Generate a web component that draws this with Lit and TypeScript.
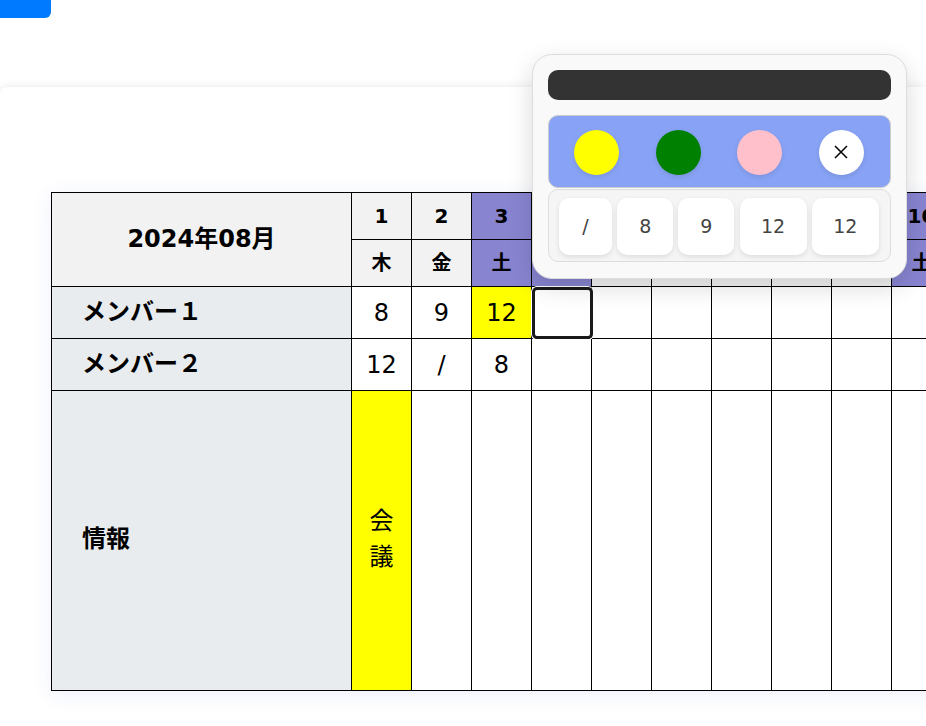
import { LitElement, html, css } from "lit";
import { customElement } from "lit/decorators.js";

const WD = ["木", "金", "土", "日", "月", "火", "水"];
const DAYS = Array.from({ length: 31 }, (_, i) => ({ d: i + 1, w: WD[i % 7] }));
const isOff = (w: string) => w === "土" || w === "日";
const M1: Record<number, string> = { 1: "8", 2: "9", 3: "12" };
const M2: Record<number, string> = { 1: "12", 2: "/", 3: "8" };

@customElement("app-root")
export class AppRoot extends LitElement {
  static styles = css`
    :host {
      display: block;
      height: 100vh;
      overflow: hidden;
      position: relative;
      background: #fff;
      font-family: "DejaVu Sans", "Noto Sans CJK JP", sans-serif;
      color: #000;
    }
    .top-btn {
      width: 51px;
      height: 18px;
      background: #007bff;
      border-radius: 0 0 6px 0;
    }
    .card {
      margin-top: 69px;
      height: 700px;
      padding: 105px 0 0 51px;
      border-radius: 8px 0 0 0;
      background: #fff;
      box-shadow: 0 0 10px rgba(0, 0, 0, 0.1);
    }
    table {
      border-collapse: collapse;
      table-layout: fixed;
      width: 2160px;
      box-shadow: 0 4px 20px rgba(40, 70, 200, 0.08);
    }
    td,
    th {
      border: 1px solid #000;
      padding: 0;
      text-align: center;
      vertical-align: middle;
      overflow: hidden;
      line-height: 1;
    }
    .c-first { width: 300px; }
    .c-day { width: 60px; }
    .h { height: 46px; background: #f2f2f2; font-weight: 700; font-size: 20px; }
    .title { background: #f2f2f2; font-size: 24px; font-weight: 700; padding-bottom: 1px; }
    .off { background: #8884d0; }
    .r { height: 52px; font-size: 24px; }
    .name {
      background: #e9ecef;
      text-align: left;
      padding: 0 0 2px 30px;
      font-size: 24px;
      font-weight: 700;
    }
    .yellow { background: #ff0; }
    .info { height: 300px; }
    .info .name { padding-bottom: 4px; }
    .v { padding-bottom: 4px; }
    .v div { line-height: 36px; font-size: 24px; }
    .sel { position: relative; overflow: visible; }
    .sel::after {
      content: "";
      position: absolute;
      left: 0;
      top: 0;
      width: 61px;
      height: 52px;
      box-sizing: border-box;
      border: 3px solid #1a1a1a;
      border-radius: 5px;
      box-shadow: 0 0 0 1px #fff;
    }
    .popup {
      position: absolute;
      left: 532px;
      top: 54px;
      width: 375px;
      height: 225px;
      box-sizing: border-box;
      padding: 15px;
      background: #f9f9f9;
      border: 1px solid #ddd;
      border-radius: 20px;
      box-shadow: 0 8px 24px rgba(0, 0, 0, 0.15);
      display: flex;
      flex-direction: column;
    }
    .bar {
      height: 30px;
      background: #333;
      border-radius: 10px;
      margin-bottom: 15px;
    }
    .colors {
      height: 73px;
      box-sizing: border-box;
      padding: 1px 26px 0 25px;
      background: #88a3f5;
      border: 1px solid #ccc;
      border-radius: 10px;
      display: flex;
      align-items: center;
      justify-content: space-between;
    }
    .dot {
      width: 45px;
      height: 45px;
      border-radius: 50%;
      box-shadow: 0 2px 5px rgba(0, 0, 0, 0.1);
      display: flex;
      align-items: center;
      justify-content: center;
    }
    .dot svg { width: 16px; height: 16px; }
    .values {
      margin-top: 1px;
      height: 73px;
      box-sizing: border-box;
      padding: 1px 10px 0;
      background: #f5f5f5;
      border: 1px solid #ddd;
      border-radius: 10px;
      display: flex;
      align-items: center;
      gap: 5.2px;
    }
    .val {
      height: 57px;
      background: #fff;
      border-radius: 10px;
      box-shadow: 0 2px 5px rgba(0, 0, 0, 0.1);
      display: flex;
      align-items: center;
      justify-content: center;
      font-size: 19px;
      color: #444;
    }
    .w53 { width: 53px; }
    .w56 { width: 56px; }
    .w67 { width: 67px; }
  `;

  render() {
    return html`
      <div class="top-btn"></div>
      <div class="card">
        <table>
          <colgroup>
            <col class="c-first" />
            ${DAYS.map(() => html`<col class="c-day" />`)}
          </colgroup>
          <tr>
            <th class="title" rowspan="2">2024年08月</th>
            ${DAYS.map((x) => html`<th class="h ${isOff(x.w) ? "off" : ""}">${x.d}</th>`)}
          </tr>
          <tr>
            ${DAYS.map((x) => html`<th class="h ${isOff(x.w) ? "off" : ""}">${x.w}</th>`)}
          </tr>
          <tr class="r">
            <td class="name">メンバー１</td>
            ${DAYS.map(
              (x) =>
                html`<td class="${x.d === 3 ? "yellow" : ""} ${x.d === 4 ? "sel" : ""}">${M1[x.d] ?? ""}</td>`
            )}
          </tr>
          <tr class="r">
            <td class="name">メンバー２</td>
            ${DAYS.map((x) => html`<td>${M2[x.d] ?? ""}</td>`)}
          </tr>
          <tr class="info">
            <td class="name">情報</td>
            ${DAYS.map((x) =>
              x.d === 1
                ? html`<td class="yellow v"><div>会</div><div>議</div></td>`
                : html`<td></td>`
            )}
          </tr>
        </table>
      </div>
      <div class="popup">
        <div class="bar"></div>
        <div class="colors">
          <div class="dot" style="background:#ffff00"></div>
          <div class="dot" style="background:#008000"></div>
          <div class="dot" style="background:#ffc0cb"></div>
          <div class="dot" style="background:#ffffff">
            <svg viewBox="0 0 16 16" fill="none" stroke="#000" stroke-width="1.5">
              <path d="M2 2 L14 14 M14 2 L2 14" />
            </svg>
          </div>
        </div>
        <div class="values">
          <div class="val w53">/</div>
          <div class="val w56">8</div>
          <div class="val w56">9</div>
          <div class="val w67">12</div>
          <div class="val w67">12</div>
        </div>
      </div>
    `;
  }
}
